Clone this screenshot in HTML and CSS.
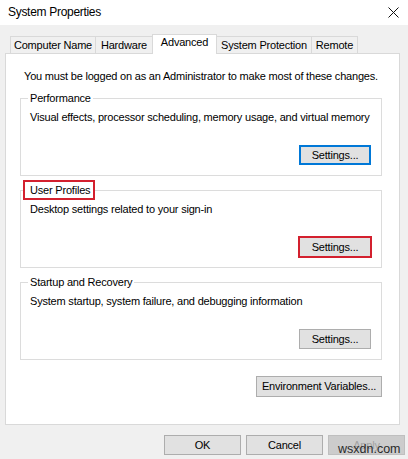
FILE: index.html
```html
<!DOCTYPE html>
<html>
<head>
  <meta charset="UTF-8">
  <title>System Properties</title>
  <link rel="stylesheet" href="styles.css">
</head>
<body>
  <div class="titlebar">
    <span class="title">System Properties</span>
    <svg class="close" width="11" height="11" viewBox="0 0 11 11">
      <path d="M0.5 0.5 L10.5 10.5 M10.5 0.5 L0.5 10.5" stroke="#111" stroke-width="1"/>
    </svg>
  </div>

  <div class="tabs">
    <div class="tab tab-computer">Computer Name</div>
    <div class="tab tab-hardware">Hardware</div>
    <div class="tab tab-advanced active">Advanced</div>
    <div class="tab tab-protection">System Protection</div>
    <div class="tab tab-remote">Remote</div>
  </div>

  <div class="panel">
    <p class="intro">You must be logged on as an Administrator to make most of these changes.</p>

    <div class="group">
      <span class="group-title">Performance</span>
      <p class="group-desc">Visual effects, processor scheduling, memory usage, and virtual memory</p>
      <div class="group-actions">
        <button class="btn focused">Settings...</button>
      </div>
    </div>

    <div class="group">
      <span class="group-title highlight">User Profiles</span>
      <p class="group-desc">Desktop settings related to your sign-in</p>
      <div class="group-actions">
        <button class="btn highlight-btn">Settings...</button>
      </div>
    </div>

    <div class="group">
      <span class="group-title">Startup and Recovery</span>
      <p class="group-desc">System startup, system failure, and debugging information</p>
      <div class="group-actions">
        <button class="btn">Settings...</button>
      </div>
    </div>

    <div class="env-row">
      <button class="btn env-btn">Environment Variables...</button>
    </div>
  </div>

  <div class="footer">
    <button class="btn dialog-btn">OK</button>
    <button class="btn dialog-btn">Cancel</button>
    <button class="btn dialog-btn disabled">Apply<span class="watermark">wsxdn.com</span></button>
  </div>
</body>
</html>
```

FILE: styles.css
```css
* {
  box-sizing: border-box;
}

body {
  margin: 0;
  width: 408px;
  height: 459px;
  background: #f0f0f0;
  font-family: "Liberation Sans", Arial, sans-serif;
  font-size: 11px;
  letter-spacing: -0.2px;
  line-height: 15px;
  color: #000;
  overflow: hidden;
}

p {
  margin: 0;
}

.titlebar {
  height: 25px;
  background: #fff;
  display: flex;
  align-items: center;
  justify-content: space-between;
  padding: 0 9px 0 8px;
}

.title {
  font-size: 12px;
  letter-spacing: -0.3px;
  margin-top: -1px;
}

.close {
  display: block;
  margin-top: 0;
}

/* tabs */
.tabs {
  display: flex;
  align-items: flex-end;
  margin: 8px 0 0 10px;
  height: 20px;
  position: relative;
  z-index: 1;
}

.tab {
  height: 17px;
  line-height: 17px;
  text-align: center;
  border: 1px solid #d9d9d9;
  border-bottom: none;
  background: #f0f0f0;
  margin-right: -1px;
  white-space: nowrap;
}

.tab-computer { width: 86px; }
.tab-hardware { width: 58px; }
.tab-advanced { width: 65px; }
.tab-protection { width: 96px; }
.tab-remote { width: 47px; }

.tab.active {
  height: 20px;
  line-height: 15px;
  background: #fff;
  position: relative;
  top: 1px;
}

/* main panel */
.panel {
  margin: 0 8px 0 5px;
  background: #fff;
  border: 1px solid #d9d9d9;
  padding: 15px 0 27px;
}

.intro {
  padding-left: 18px;
  white-space: nowrap;
}

.group {
  display: flex;
  flex-direction: column;
  margin: 14px 17px 0 14px;
  border: 1px solid #dcdcdc;
  padding: 0 10px 10px 7px;
}

.group + .group {
  margin-top: 14px;
}

.group-title {
  align-self: flex-start;
  margin-top: -8px;
  padding: 0 2px;
  background: #fff;
}

.group-title.highlight {
  outline: 2px solid #d3202e;
  outline-offset: 0;
  margin-left: -3px;
  padding: 0 3px 0 5px;
  line-height: 16px;
  margin-top: -9px;
}

.group-desc {
  margin-top: 4px;
  padding-left: 2px;
  white-space: nowrap;
}

.group-actions {
  display: flex;
  justify-content: flex-end;
  margin-top: 20px;
}

.btn {
  font-family: inherit;
  font-size: 11px;
  letter-spacing: -0.2px;
  color: #000;
  background: #e1e1e1;
  border: 1px solid #adadad;
  border-radius: 0;
  height: 20px;
  width: 72px;
  padding: 0;
  line-height: 17px;
  margin: 0;
  white-space: nowrap;
}

.btn.focused {
  border: 2px solid #0078d7;
  line-height: 15px;
}

.btn.highlight-btn {
  outline: 2px solid #d3202e;
  outline-offset: -1px;
}

.env-row {
  display: flex;
  justify-content: flex-end;
  margin: 16px 17px 0 0;
}

.env-btn {
  width: 126px;
  height: 21px;
}

/* dialog buttons */
.footer {
  display: flex;
  justify-content: flex-end;
  gap: 5px;
  margin: 10px 3px 0 0;
}

.dialog-btn {
  width: 77px;
}

.dialog-btn.disabled {
  color: #a3a3a3;
  background: #cccccc;
  border-color: #bfbfbf;
  position: relative;
}

.watermark {
  position: absolute;
  left: 9px;
  top: 6px;
  font-size: 12.5px;
  letter-spacing: 0;
  line-height: 14px;
  color: #2a2a2a;
}
```
